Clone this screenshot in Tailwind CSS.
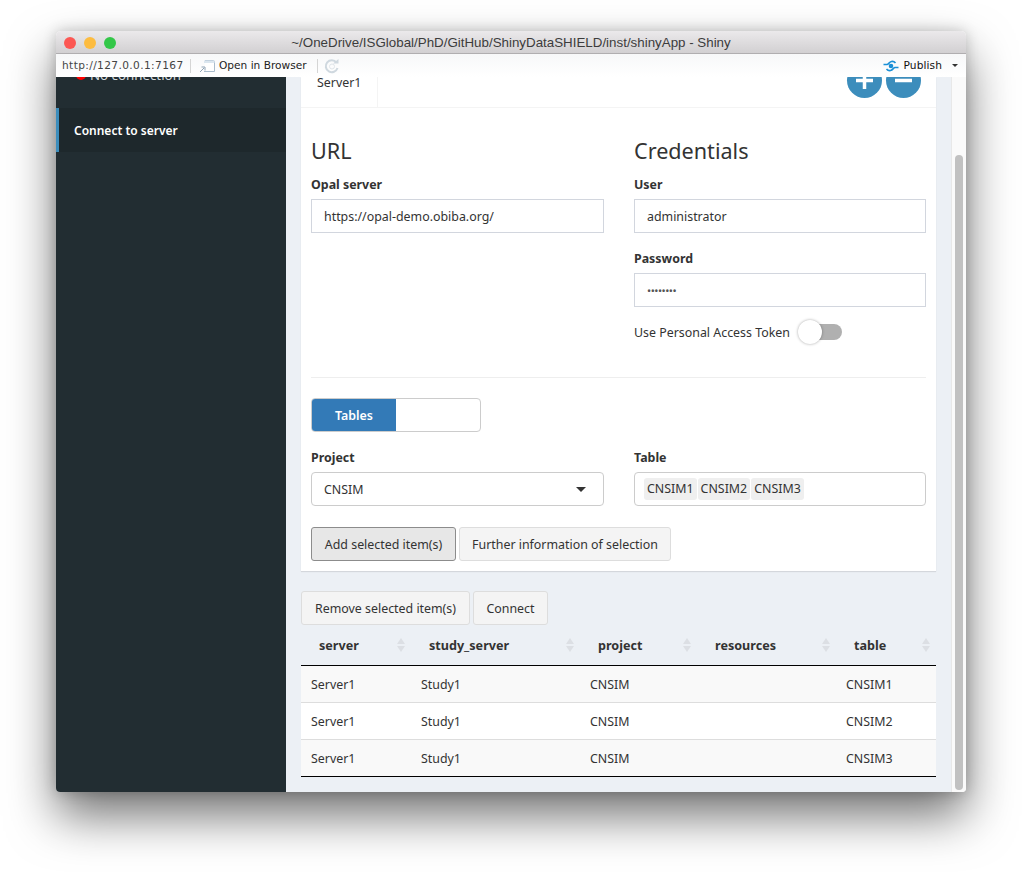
<!DOCTYPE html>
<html lang="en">
<head>
<meta charset="UTF-8">
<script src="https://cdn.jsdelivr.net/npm/@tailwindcss/browser@4"></script>
<title>Shiny</title>
</head>
<body class="bg-white h-[872px] overflow-hidden font-['Noto_Sans',sans-serif] text-[12.4px] text-[#333]">

<!-- window -->
<div class="ml-[56px] mt-[31px] w-[910px] h-[761px] rounded-t-[5px] rounded-b-[4px] overflow-hidden shadow-[0_24px_48px_rgba(0,0,0,0.55),0_0_14px_rgba(0,0,0,0.2)] flex flex-col">

  <!-- title bar -->
  <div class="relative h-[23px] shrink-0 bg-gradient-to-b from-[#ebe9eb] to-[#d2d0d2] border-b border-[#b0aeb0] flex items-center justify-center pt-[2px] font-['Liberation_Sans',sans-serif] text-[13.35px] text-[#3c3c3c]">
    <div class="absolute left-[8px] top-[6px] flex gap-[8px]">
      <span class="w-[12px] h-[12px] rounded-full bg-[#fc5753]"></span>
      <span class="w-[12px] h-[12px] rounded-full bg-[#fdbc40]"></span>
      <span class="w-[12px] h-[12px] rounded-full bg-[#33c748]"></span>
    </div>
    ~/OneDrive/ISGlobal/PhD/GitHub/ShinyDataSHIELD/inst/shinyApp - Shiny
  </div>

  <!-- toolbar -->
  <div class="h-[23px] shrink-0 bg-gradient-to-b from-[#f7f8f9] to-white flex items-center pl-[6px] pr-[8px] font-['DejaVu_Sans',sans-serif] text-[10.6px] text-[#222]">
    <span class="w-[121px] text-[#444] tracking-[0.38px] whitespace-nowrap">http://127.0.0.1:7167</span>
    <span class="w-px h-[14px] bg-[#d5d5d5] ml-[7px]"></span>
    <svg class="ml-[8px]" width="17" height="14" viewBox="0 0 17 14" fill="none"><path d="M6 1.500h8c1 0 1.500.5 1.500 1.500v9.500H5" fill="#fff" stroke="#a9bccd"/><path d="M5 1.500h10.500V4H5z" fill="#dbe6ef"/><path d="M1 13l4-4M2.500 8h3.500v3.500" stroke="#8fa3b5"/></svg>
    <span class="ml-[3px]">Open in Browser</span>
    <span class="w-px h-[14px] bg-[#d5d5d5] ml-[10px]"></span>
    <svg class="ml-[6px]" width="16" height="16" viewBox="0 0 16 16" fill="none"><path d="M12.500 4.500A6 6 0 1 0 13.500 10" stroke="#cfd8df" stroke-width="2"/><path d="M9 5.500h5.500V1z" fill="#cfd8df"/><circle cx="8" cy="8.500" r="2.500" stroke="#e0e5ea"/></svg>
    <svg class="ml-auto" width="16" height="12" viewBox="0 0 16 12" fill="none"><path d="M0.500 4.500h3.500C5.500 4.500 6 2 8.500 1.500c1.500-.3 3 .3 4 1.500" stroke="#1a8fd6" stroke-width="1.600"/><path d="M15.500 7.500h-3.500C10.500 7.500 10 10 7.500 10.500c-1.500.3-3-.3-4-1.500" stroke="#1a8fd6" stroke-width="1.600"/><circle cx="8" cy="6" r="2.300" fill="#1a8fd6"/></svg>
    <span class="ml-[5px] text-[#111] tracking-[0.1px]">Publish</span>
    <span class="ml-[10px] w-0 h-0 border-x-[3px] border-x-transparent border-t-[3px] border-t-[#333]"></span>
  </div>

  <!-- app -->
  <div class="flex flex-1 min-h-0">

    <!-- sidebar -->
    <aside class="w-[230px] shrink-0 bg-[#222d32] overflow-hidden">
      <div class="-mt-[23px] h-[54px] pt-[13px] pl-[20px] flex items-start gap-[4px] text-[#d5dcdf] text-[13.3px] leading-[16px]">
        <span class="w-[10px] h-[10px] mt-[3px] rounded-full bg-[#f00]"></span>
        <span>No connection</span>
      </div>
      <div class="h-[44px] border-l-[3px] border-[#3c8dbc] bg-[#1e282c] pl-[15px] pt-[1px] flex items-center text-white font-semibold text-[12px]">Connect to server</div>
    </aside>

    <!-- main -->
    <main class="flex-1 bg-[#ecf0f5] overflow-hidden pl-[15px] pr-[15px]">
      <!-- card -->
      <section class="bg-white h-[494px] shadow-[0_1px_1px_rgba(0,0,0,0.1)] overflow-hidden">
        <div class="h-[31px] border-b border-[#f4f4f4] flex justify-between pr-[15px]">
          <div class="w-[77px] border-r border-[#f4f4f4] pl-[16px] leading-[12px]">Server1</div>
          <div class="flex gap-[4px] -mt-[14px] h-[36px]">
            <span class="w-[35px] h-[35px] rounded-full bg-[#3c8dbc] flex items-center justify-center">
              <svg width="19" height="19" viewBox="0 0 19 19"><path d="M9.500 1v17M1 9.500h17" stroke="#fff" stroke-width="3.500"/></svg>
            </span>
            <span class="w-[35px] h-[35px] rounded-full bg-[#3c8dbc] flex items-center justify-center">
              <svg width="19" height="19" viewBox="0 0 19 19"><path d="M1 9.500h17" stroke="#fff" stroke-width="3.500"/></svg>
            </span>
          </div>
        </div>

        <div class="px-[10px]">
          <div class="grid grid-cols-[293px_292px] gap-x-[30px]">
            <div>
              <h3 class="mt-[26px] text-[21.6px] leading-[34px]">URL</h3>
              <label class="block mt-[8px] font-bold leading-[18px]">Opal server</label>
              <div class="mt-[5px] h-[34px] border border-[#d2d6de] pl-[12px] pt-[2px] flex items-center">https://opal-demo.obiba.org/</div>
            </div>
            <div>
              <h3 class="mt-[26px] text-[21.6px] leading-[34px]">Credentials</h3>
              <label class="block mt-[8px] font-bold leading-[18px]">User</label>
              <div class="mt-[5px] h-[34px] border border-[#d2d6de] pl-[12px] pt-[2px] flex items-center">administrator</div>
              <label class="block mt-[17px] font-bold leading-[18px]">Password</label>
              <div class="mt-[5px] h-[34px] border border-[#d2d6de] pl-[12px] pt-[2px] flex items-center text-[11px] text-[#555] tracking-[-0.5px]">••••••••</div>
              <div class="mt-[13px] h-[24px] flex items-center">
                <span class="pt-[2px]">Use Personal Access Token</span>
                <span class="relative ml-[13px] w-[39px] h-[16px] rounded-full bg-[#b0b0b0]">
                  <span class="absolute -left-[5px] -top-[4px] w-[24px] h-[24px] rounded-full bg-white shadow-[0_0_3px_rgba(0,0,0,0.35)]"></span>
                </span>
              </div>
            </div>
          </div>

          <hr class="mt-[33px] border-[#eee]">

          <div class="mt-[20px] w-[170px] h-[34px] rounded-[4px] border border-[#ccc] overflow-hidden">
            <div class="w-[84px] h-full bg-[#337ab7] text-white font-semibold pt-[2px] flex items-center justify-center">Tables</div>
          </div>

          <div class="grid grid-cols-[293px_292px] gap-x-[30px] mt-[17px]">
            <div>
              <label class="block font-bold leading-[18px]">Project</label>
              <div class="mt-[5px] h-[34px] border border-[#ccc] rounded-[4px] pl-[12px] pr-[17px] flex items-center justify-between">
                <span class="pt-[2px]">CNSIM</span>
                <span class="w-0 h-0 border-x-[5px] border-x-transparent border-t-[5px] border-t-[#333]"></span>
              </div>
            </div>
            <div>
              <label class="block font-bold leading-[18px]">Table</label>
              <div class="mt-[5px] h-[34px] border border-[#ccc] rounded-[4px] pl-[9px] flex items-center gap-[1px]">
                <span class="bg-[#efefef] rounded-[3px] px-[3px] pt-[1px] h-[22px] flex items-center">CNSIM1</span>
                <span class="bg-[#efefef] rounded-[3px] px-[3px] pt-[1px] h-[22px] flex items-center">CNSIM2</span>
                <span class="bg-[#efefef] rounded-[3px] px-[3px] pt-[1px] h-[22px] flex items-center">CNSIM3</span>
              </div>
            </div>
          </div>

          <div class="mt-[21px] flex gap-[3px]">
            <button class="w-[145px] h-[34px] pt-[2px] rounded-[3px] bg-[#e7e7e7] border border-[#8c8c8c]">Add selected item(s)</button>
            <button class="w-[212px] h-[34px] pt-[2px] rounded-[3px] bg-[#f4f4f4] border border-[#ddd]">Further information of selection</button>
          </div>
        </div>
      </section>

      <div class="mt-[20px] flex gap-[3px]">
        <button class="w-[169px] h-[34px] pt-[2px] rounded-[3px] bg-[#f4f4f4] border border-[#ddd]">Remove selected item(s)</button>
        <button class="w-[75px] h-[34px] pt-[2px] rounded-[3px] bg-[#f4f4f4] border border-[#ddd]">Connect</button>
      </div>

      <!-- table -->
      <table class="w-[635px] table-fixed border-collapse">
        <colgroup>
          <col class="w-[110px]"><col class="w-[169px]"><col class="w-[117px]"><col class="w-[139px]"><col class="w-[100px]">
        </colgroup>
        <thead>
          <tr class="h-[40px] border-b border-black text-left font-bold text-[12.6px]">
            <th class="pl-[18px] pt-[4px] relative">server<span class="absolute right-[6px] top-[13px] flex flex-col gap-[2px]"><i class="w-0 h-0 border-x-[4px] border-x-transparent border-b-[6px] border-b-[#dcdfe4]"></i><i class="w-0 h-0 border-x-[4px] border-x-transparent border-t-[6px] border-t-[#dcdfe4]"></i></span></th>
            <th class="pl-[18px] pt-[4px] relative">study_server<span class="absolute right-[6px] top-[13px] flex flex-col gap-[2px]"><i class="w-0 h-0 border-x-[4px] border-x-transparent border-b-[6px] border-b-[#dcdfe4]"></i><i class="w-0 h-0 border-x-[4px] border-x-transparent border-t-[6px] border-t-[#dcdfe4]"></i></span></th>
            <th class="pl-[18px] pt-[4px] relative">project<span class="absolute right-[6px] top-[13px] flex flex-col gap-[2px]"><i class="w-0 h-0 border-x-[4px] border-x-transparent border-b-[6px] border-b-[#dcdfe4]"></i><i class="w-0 h-0 border-x-[4px] border-x-transparent border-t-[6px] border-t-[#dcdfe4]"></i></span></th>
            <th class="pl-[18px] pt-[4px] relative">resources<span class="absolute right-[6px] top-[13px] flex flex-col gap-[2px]"><i class="w-0 h-0 border-x-[4px] border-x-transparent border-b-[6px] border-b-[#dcdfe4]"></i><i class="w-0 h-0 border-x-[4px] border-x-transparent border-t-[6px] border-t-[#dcdfe4]"></i></span></th>
            <th class="pl-[18px] pt-[4px] relative">table<span class="absolute right-[6px] top-[13px] flex flex-col gap-[2px]"><i class="w-0 h-0 border-x-[4px] border-x-transparent border-b-[6px] border-b-[#dcdfe4]"></i><i class="w-0 h-0 border-x-[4px] border-x-transparent border-t-[6px] border-t-[#dcdfe4]"></i></span></th>
          </tr>
        </thead>
        <tbody class="[&_td]:pl-[10px] [&_td]:pt-[4px]">
          <tr class="h-[37px] bg-[#f9f9f9] border-b border-[#ddd]"><td>Server1</td><td>Study1</td><td>CNSIM</td><td></td><td>CNSIM1</td></tr>
          <tr class="h-[37px] bg-white border-b border-[#ddd]"><td>Server1</td><td>Study1</td><td>CNSIM</td><td></td><td>CNSIM2</td></tr>
          <tr class="h-[37px] bg-[#f9f9f9] border-b border-black"><td>Server1</td><td>Study1</td><td>CNSIM</td><td></td><td>CNSIM3</td></tr>
        </tbody>
      </table>
    </main>

    <!-- scrollbar -->
    <div class="w-[15px] shrink-0 bg-[#fafafa] border-l border-[#e8e8e8] pt-[78px] pl-[3px]">
      <div class="w-[8px] h-[635px] rounded-full bg-[#c1c1c1]"></div>
    </div>
  </div>
</div>
</body>
</html>
